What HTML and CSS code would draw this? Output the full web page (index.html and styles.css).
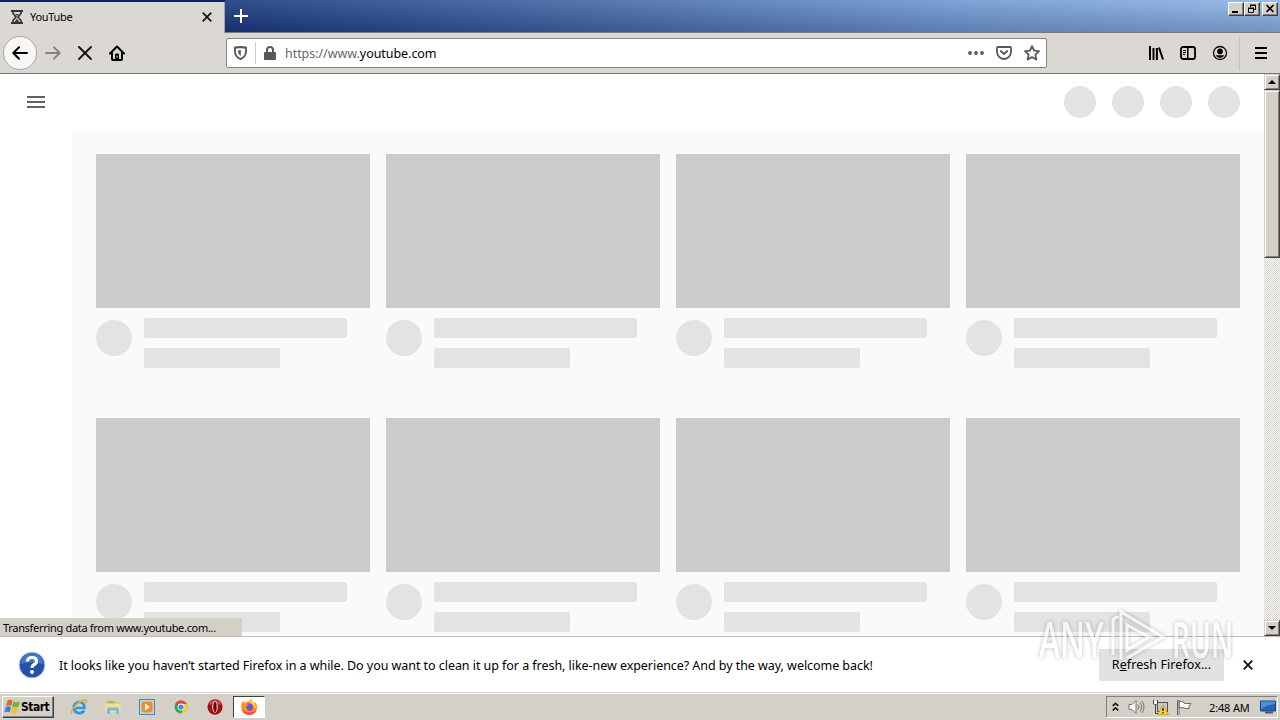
FILE: index.html
```
<!DOCTYPE html>
<html lang="en">
<head>
    <meta charset="UTF-8">
    <title>YouTube</title>
    <link rel="stylesheet" href="styles.css">
</head>
<body>
    <div class="tab-bar">
        <div class="tab">
            <svg class="tab-icon" width="12" height="14" viewBox="0 0 12 14" fill="none" stroke="#333"><path d="M0 1h12M0 13h12" stroke-width="2"/><path d="M2 1v2.500l3 3.500-3 3.500V13M10 1v2.500L7 7l3 3.500V13" stroke-width="1.600"/><path d="M4 4h4L6 6zM3.500 12L6 8.500 8.500 12z" fill="#444" stroke="none"/></svg>
            <span class="tab-title">YouTube</span>
            <svg class="tab-close" width="10" height="10" viewBox="0 0 10 10" stroke="#111" stroke-width="1.700"><path d="M.7.7l8.600 8.600M9.300.7L.7 9.300"/></svg>
        </div>
        <svg class="new-tab" width="14" height="14" viewBox="0 0 14 14" stroke="#fff" stroke-width="2"><path d="M7 0v14M0 7h14"/></svg>
        <div class="window-buttons">
            <div class="win-btn"><svg width="12" height="10" viewBox="0 0 12 10"><path d="M2 7h6v2H2z"/></svg></div>
            <div class="win-btn"><svg width="12" height="10" viewBox="0 0 12 10" fill="none" stroke="#000"><path d="M4.500 3V1.500h5v4H8M4 1.500h6M2.500 4.500h5v4h-5zM2 4.500h6"/><path d="M4 1h6M2 4h6"/></svg></div>
            <div class="win-btn close"><svg width="12" height="10" viewBox="0 0 12 10" stroke="#000" stroke-width="1.600"><path d="M2.500 1l7 7M9.500 1l-7 7"/></svg></div>
        </div>
    </div>

    <div class="toolbar">
        <div class="back"><svg width="16" height="14" viewBox="0 0 16 14" fill="none" stroke="#000" stroke-width="2" stroke-linecap="round" stroke-linejoin="round"><path d="M15 7H1.500M7 1.300L1.300 7 7 12.700"/></svg></div>
        <svg class="forward" width="16" height="14" viewBox="0 0 16 14" fill="none" stroke="#85837f" stroke-width="1.900" stroke-linecap="round" stroke-linejoin="round"><path d="M1 7h13.500M9 1.300L14.700 7 9 12.700"/></svg>
        <svg class="stop" width="14" height="14" viewBox="0 0 14 14" stroke="#111" stroke-width="1.900" stroke-linecap="round"><path d="M1 1l12 12M13 1L1 13"/></svg>
        <svg class="home" width="16" height="16" viewBox="0 0 16 16" fill="none" stroke="#000" stroke-width="2" stroke-linecap="round" stroke-linejoin="round"><path d="M1 8.500L8 1.500l7 7M3 8v6q0 1 1 1h8q1 0 1-1V8"/><path d="M6.500 14.500V9h3v5.500z" fill="#000" stroke-width="1"/><path d="M8 11v1.500" stroke="#ddd" stroke-width="1"/></svg>
        <div class="url-bar">
            <svg class="shield" width="13" height="14" viewBox="0 0 13 14" fill="none" stroke="#58585a" stroke-width="1.900"><path d="M1 1.500Q4 1.500 6.500 1 9 1.500 12 1.500v4.500Q11.500 11 6.500 13 1.500 11 1 6z" stroke-linejoin="round"/><path d="M6.800 4v6Q4 8.500 4 4.500z" fill="#58585a" stroke="none"/></svg>
            <span class="url-sep"></span>
            <svg class="lock" width="12" height="14" viewBox="0 0 12 14"><path d="M3 7V4a3 3 0 016 0v3" fill="none" stroke="#58585a" stroke-width="2"/><rect y="6" width="12" height="8" rx="1" fill="#58585a"/></svg>
            <span class="url">https://www.<b>youtube.com</b></span>
            <svg class="dots" width="16" height="4" viewBox="0 0 16 4" fill="#58585a"><circle cx="2" cy="2" r="1.900"/><circle cx="8" cy="2" r="1.900"/><circle cx="14" cy="2" r="1.900"/></svg>
            <svg class="pocket" width="16" height="14" viewBox="0 0 16 14" fill="none" stroke="#58585a" stroke-width="1.800" stroke-linecap="round" stroke-linejoin="round"><path d="M2 1h12q1 0 1 1v4a7 7 0 01-14 0V2q0-1 1-1z"/><path d="M4.700 5L8 8l3.300-3"/></svg>
            <svg class="star" width="16" height="16" viewBox="0 0 16 16" fill="none" stroke="#58585a" stroke-width="1.800" stroke-linejoin="round"><path d="M8 1.100l2.100 4.500 4.900.6-3.600 3.400.9 4.900L8 12.100l-4.300 2.400.9-4.900L1 6.200l4.900-.6z"/></svg>
        </div>
        <div class="tools">
            <svg width="16" height="14" viewBox="0 0 16 14" stroke="#000" stroke-width="2"><path d="M2 0v14M5.500 2v12M8.900 2v12M11 1.500l4 12"/></svg>
            <svg width="16" height="14" viewBox="0 0 16 14" fill="none" stroke="#000"><rect x="1" y="1" width="14" height="12" rx="2" stroke-width="1.800"/><path d="M7.800 1v12" stroke-width="1.500"/><path d="M3 4.500h3M3 6.500h3M3 8.500h2"/></svg>
            <svg width="16" height="16" viewBox="0 0 16 16"><circle cx="8" cy="8" r="6.500" fill="none" stroke="#000" stroke-width="1.300"/><circle cx="8" cy="6.400" r="2.800"/><path d="M3.600 10.300h8.800Q11 13 8 13T3.600 10.300z"/></svg>
            <span class="tool-sep"></span>
            <svg width="12" height="12" viewBox="0 0 12 12" stroke="#000" stroke-width="2"><path d="M0 1h12M0 6h12M0 11h12"/></svg>
        </div>
    </div>

    <div class="viewport">
        <div class="page">
            <div class="masthead">
                <svg class="guide" width="18" height="12" viewBox="0 0 18 12" stroke="#606060" stroke-width="2"><path d="M0 1h18M0 6h18M0 11h18"/></svg>
                <div class="masthead-buttons">
                    <i></i><i></i><i></i><i></i>
                </div>
            </div>
            <div class="home-grid">
                <div class="card"><div class="thumb"></div><div class="details"><div class="avatar"></div><div class="lines"><div class="line"></div><div class="line short"></div></div></div></div>
                <div class="card"><div class="thumb"></div><div class="details"><div class="avatar"></div><div class="lines"><div class="line"></div><div class="line short"></div></div></div></div>
                <div class="card"><div class="thumb"></div><div class="details"><div class="avatar"></div><div class="lines"><div class="line"></div><div class="line short"></div></div></div></div>
                <div class="card"><div class="thumb"></div><div class="details"><div class="avatar"></div><div class="lines"><div class="line"></div><div class="line short"></div></div></div></div>
                <div class="card"><div class="thumb"></div><div class="details"><div class="avatar"></div><div class="lines"><div class="line"></div><div class="line short"></div></div></div></div>
                <div class="card"><div class="thumb"></div><div class="details"><div class="avatar"></div><div class="lines"><div class="line"></div><div class="line short"></div></div></div></div>
                <div class="card"><div class="thumb"></div><div class="details"><div class="avatar"></div><div class="lines"><div class="line"></div><div class="line short"></div></div></div></div>
                <div class="card"><div class="thumb"></div><div class="details"><div class="avatar"></div><div class="lines"><div class="line"></div><div class="line short"></div></div></div></div>
            </div>
        </div>
        <div class="scrollbar">
            <div class="scroll-btn"><svg width="8" height="4" viewBox="0 0 8 4"><path d="M4 0l4 4H0z"/></svg></div>
            <div class="scroll-thumb"></div>
            <div class="scroll-btn bottom"><svg width="8" height="4" viewBox="0 0 8 4"><path d="M0 0h8L4 4z"/></svg></div>
        </div>
        <div class="status"><span>Transferring data from www.youtube.com...</span></div>
    </div>

    <div class="notification">
        <svg class="help" width="28" height="28" viewBox="0 0 28 28"><circle cx="14" cy="14" r="13.300" fill="#b9c9e6"/><circle cx="14" cy="14" r="12.300" fill="#2350a8"/><path d="M3 13a11 11 0 0122 0q-11-4-22 0z" fill="#4877c6"/><path d="M9.500 10.500Q9.500 6.500 14 6.500t4.500 3.800q0 2-2.300 3.200Q14 14.700 14 17" fill="none" stroke="#fff" stroke-width="3.200"/><circle cx="14" cy="21" r="2" fill="#fff"/></svg>
        <span class="message">It looks like you haven’t started Firefox in a while. Do you want to clean it up for a fresh, like-new experience? And by the way, welcome back!</span>
        <div class="refresh"><span>R<u>e</u>fresh Firefox...</span></div>
        <svg class="dismiss" width="10" height="10" viewBox="0 0 10 10" stroke="#111" stroke-width="1.800"><path d="M.7.7l8.600 8.600M9.300.7L.7 9.300"/></svg>
    </div>

    <div class="taskbar">
        <div class="start">
            <svg width="17" height="16" viewBox="0 0 17 16"><path d="M3.500 1.500Q6 0 8.500 1.800L7.300 7Q4.500 5.500 2 7z" fill="#e8642c"/><path d="M9.400 2.200Q12.500 4 16 2.300L14.500 7.800Q11.500 9 8.200 7.400z" fill="#74b53c"/><path d="M1.700 8Q4.500 6.600 7 8l-1.300 5.500Q3 12 .3 13.500z" fill="#3f7fd2"/><path d="M8 8.500Q11 10 14.200 8.800L12.800 14Q9.500 15.500 6.600 13.800z" fill="#f5bf2c"/></svg>
            <span>Start</span>
        </div>
        <div class="launch">
            <svg width="18" height="18" viewBox="0 0 18 18" fill="none"><path d="M14.200 12.500A5.600 5.600 0 118.900 4Q14.500 4 14.500 10H5.500" stroke="#3199d8" stroke-width="2.700"/><path d="M5.500 10Q6 5.800 9 5.200" stroke="#8bd5f4"/><path d="M2 16Q0 13.500 4.500 8.500T15.500 1.500Q18 2 15.500 5" stroke="#e3ad3c" stroke-width="1.400"/></svg>
            <svg width="18" height="18" viewBox="0 0 18 18"><path d="M2 3.500l1-1h5l1 1.500h7v5H2z" fill="#e5c45e"/><path d="M4 3h7v3H4z" fill="#8fc08a"/><path d="M1.500 5.500h15v9h-15z" fill="#f4df91"/><path d="M3 16v-5q0-1.500 1.500-1.500h9q1.500 0 1.500 1.500v5h-3v-3.500H6V16z" fill="#78b9df"/></svg>
            <svg width="18" height="18" viewBox="0 0 18 18"><rect x="1.500" y="1.500" width="15" height="15" fill="#b7d5ed" stroke="#4d83b3"/><rect x="3.500" y="3.500" width="11" height="11" rx="3" fill="#f28c1c"/><path d="M7 5.500l5 3.500-5 3.500z" fill="#fff"/></svg>
            <svg width="18" height="18" viewBox="0 0 18 18"><circle cx="9" cy="9" r="6.500" fill="#35a653"/><path d="M9 9L3.300 5.800A6.500 6.500 0 0114.700 5.900L9 6z" fill="#df4738"/><path d="M9 6h5.700A6.500 6.500 0 019 15.500L11.600 10.500z" fill="#f9c92e"/><circle cx="9" cy="9" r="3.400" fill="#fff"/><circle cx="9" cy="9" r="2.600" fill="#4384ed"/></svg>
            <svg width="18" height="18" viewBox="0 0 18 18"><ellipse cx="9" cy="9" rx="7.500" ry="7.800" fill="#a90e14"/><path d="M3 7Q4 2 9 2t6 5Q9 4 3 7z" fill="#d24b4a"/><ellipse cx="9" cy="9" rx="2.800" ry="5.700" fill="#e9dedb"/><ellipse cx="9" cy="9" rx="1.700" ry="5" fill="#65090e"/></svg>
        </div>
        <div class="task-active">
            <svg width="18" height="18" viewBox="0 0 18 18"><path d="M2 5l1-2 2 2q2-2 4-1.500Q9.500 1.500 11 .5q.5 2.500 3.500 4.500l.5-1q2 2.500 2 5.500a7.800 7.500 0 01-15.600 0Q1 7 2 5z" fill="#ff8a22"/><path d="M1.400 9Q1.500 16.500 9 17q6 0 7.700-5-5 3.500-10 2T1.400 9z" fill="#f9503f"/><path d="M11 .5q.5 2.500 3.500 4.500 2 2 1 6-2-5-6-6.500Q9.500 2 11 .5z" fill="#ffd43b"/><circle cx="9.200" cy="9.300" r="3.700" fill="#7051c8"/><path d="M4 6.500q3-1 5 .8-2 .2-3 1.500 0 3 3.500 3.200Q5 13.500 4 10z" fill="#ff9c27"/></svg>
        </div>
        <div class="tray">
            <svg class="chevrons" width="7" height="10" viewBox="0 0 7 10" fill="none" stroke="#000" stroke-width="1.500"><path d="M.7 4L3.500 1.300 6.300 4M.7 8.500l2.800-2.700 2.800 2.700"/></svg>
            <svg class="sound" width="17" height="16" viewBox="0 0 17 16" fill="none" stroke="#777"><path d="M1 5.500h3l4-4v13l-4-4H1z" fill="#f7f7f5"/><path d="M10 5.500q2 2.500 0 5M12 3.500q3.500 4.500 0 9M14 2q4 6 0 12"/></svg>
            <svg class="network" width="17" height="16" viewBox="0 0 17 16"><rect x="5.500" y="3.500" width="10" height="9" fill="#c8c9c7" stroke="#555"/><path d="M1.500 1v4h4V1M3.500 5v9.500H8" fill="none" stroke="#444"/><path d="M2 1.500h3V5H2z" fill="#f7f7f7"/><path d="M11 6l5.500 9.500h-11z" fill="#ffd42c" stroke="#b78200" stroke-width=".6"/><path d="M11 9v3M11 13v1.200" stroke="#000" stroke-width="1.200"/></svg>
            <svg class="flag" width="16" height="15" viewBox="0 0 16 15" fill="#fff" stroke="#666"><path d="M1.500.5h1.500v14H1.500zM3 1.500q3-1 5 1 0 1.500 1.500 1H15l-2 2.500 0 2.500Q10 9 8 8 6 7 3 8z"/></svg>
            <span class="clock">2:48 AM</span>
            <svg class="desktop" width="16" height="14" viewBox="0 0 16 14"><path d="M.5 1h15v10H.5z" fill="#2463b5" stroke="#174579"/><path d="M1 1.500h14V4Q7 5 1 9z" fill="#4b91d9"/><path d="M5 11.500h8v2H5z" fill="#4c5968"/></svg>
        </div>
    </div>

    <svg class="watermark" width="204" height="72" viewBox="0 0 204 72">
        <g class="watermark-text">
            <text x="4" y="53" textLength="65" lengthAdjust="spacingAndGlyphs">ANY</text>
            <text x="137" y="53" textLength="61" lengthAdjust="spacingAndGlyphs">RUN</text>
        </g>
        <path d="M78 50V16q0-4 6-4M86 54V7l42 25-36 21M92 45V20l22 12z" fill="none" stroke="#fff" stroke-width="3"/>
    </svg>
</body>
</html>
```
FILE: styles.css
```
body {
    margin: 0;
    width: 1280px;
    height: 720px;
    overflow: hidden;
    position: relative;
    display: flex;
    flex-direction: column;
    background: #fff;
    font-family: "Noto Sans", sans-serif;
    color: #000;
}
svg {
    display: block;
    flex: none;
}
.tab-bar {
    display: flex;
    height: 33px;
    box-sizing: border-box;
    background: linear-gradient(to bottom, rgba(255, 255, 255, 0.1), rgba(0, 0, 30, 0.18)), linear-gradient(to right, #0a246a, #1a3980 225px, #446aa7 600px, #7099d2 950px, #8eb5e5);
    border-bottom: 1px solid #77797c;
    flex: none;
}
.tab {
    display: flex;
    align-items: center;
    width: 225px;
    height: 31px;
    margin-top: 2px;
    box-sizing: border-box;
    background: #dbd8d3;
    border-right: 1px solid #a6a4a1;
    margin-bottom: -1px;
    padding: 0 12px 1px 11px;
    box-shadow: 0 -2px #0a246a;
}
.tab-title {
    font-size: 11px;
    line-height: 15px;
    margin: -2px 0 0 7px;
    letter-spacing: -0.3px;
    flex: 1;
}
.new-tab {
    margin: 9px 0 0 9px;
}
.window-buttons {
    display: flex;
    margin: 2px 2px 0 auto;
}
.win-btn {
    width: 16px;
    height: 14px;
    box-sizing: border-box;
    background: #d4d0c8;
    border: 1px solid;
    border-color: #fff #404040 #404040 #fff;
    padding: 1px;
    box-shadow: inset -1px -1px #808080;
}
.win-btn.close {
    margin-left: 2px;
}
.toolbar {
    display: flex;
    align-items: center;
    height: 41px;
    box-sizing: border-box;
    background: #dbd8d3;
    border-bottom: 1px solid #777;
    padding-left: 3px;
    flex: none;
}
.back {
    width: 34px;
    height: 34px;
    box-sizing: border-box;
    border: 1px solid #aaa8a3;
    border-radius: 50%;
    background: #f8f7f6;
    display: flex;
    align-items: center;
    justify-content: center;
}
.forward {
    margin-left: 8px;
}
.stop {
    margin-left: 17px;
}
.home {
    margin-left: 17px;
}
.url-bar {
    display: flex;
    align-items: center;
    width: 821px;
    height: 30px;
    box-sizing: border-box;
    margin-left: 101px;
    border: 1px solid #858482;
    border-radius: 2px;
    background: #fff;
    padding: 0 6px 0 7px;
}
.url-sep {
    width: 1px;
    height: 22px;
    background: #ccc;
    margin: 0 8px 0 8px;
}
.url {
    font-size: 12.5px;
    letter-spacing: -0.05px;
    margin-left: 9px;
    color: #666;
    flex: 1;
}
.url b {
    font-weight: normal;
    color: #000;
}
.pocket {
    margin: 0 12px;
}
.tools {
    display: flex;
    align-items: center;
    margin: 0 13px 0 auto;
    gap: 16px;
}
.tool-sep {
    width: 1px;
    height: 34px;
    background: #c5c2bd;
    margin: 0 -1px 0 -5px;
}
.viewport {
    position: relative;
    display: flex;
    height: 562px;
    overflow: hidden;
    flex: none;
}
.page {
    width: 1264px;
}
.masthead {
    display: flex;
    align-items: center;
    height: 56px;
    padding: 0 24px 0 27px;
}
.masthead-buttons {
    display: flex;
    gap: 16px;
    margin-left: auto;
}
.masthead-buttons i {
    width: 32px;
    height: 32px;
    border-radius: 50%;
    background: #e3e3e3;
}
.home-grid {
    display: grid;
    grid-template-columns: repeat(4, 274px);
    gap: 50px 16px;
    margin-left: 72px;
    padding: 24px;
    background: #fafafa;
}
.thumb {
    height: 154px;
    background: #cbcbcb;
}
.details {
    display: flex;
    margin-top: 10px;
}
.avatar {
    width: 36px;
    height: 36px;
    border-radius: 50%;
    background: #e3e3e3;
    margin: 2px 12px 0 0;
}
.line {
    width: 203px;
    height: 20px;
    border-radius: 2px;
    background: #e3e3e3;
}
.line.short {
    width: 136px;
    margin-top: 10px;
}
.scrollbar {
    width: 16px;
    display: flex;
    flex-direction: column;
    background: repeating-conic-gradient(#fff 0 25%, #d4d0c8 0 50%) 0 0 / 2px 2px;
}
.scroll-btn, .scroll-thumb {
    box-sizing: border-box;
    background: #d4d0c8;
    border: 1px solid;
    border-color: #d4d0c8 #404040 #404040 #d4d0c8;
    box-shadow: inset 1px 1px #fff, inset -1px -1px #808080;
}
.scroll-btn {
    height: 16px;
    display: flex;
    align-items: center;
    justify-content: center;
}
.scroll-btn.bottom {
    margin-top: auto;
}
.scroll-thumb {
    height: 168px;
}
.status {
    position: absolute;
    left: 0;
    bottom: 0;
    width: 242px;
    height: 18px;
    background: #d4d0c8;
    box-sizing: border-box;
    padding-left: 3px;
    font-size: 11px;
    line-height: 20px;
    letter-spacing: -0.31px;
    white-space: nowrap;
}
.notification {
    display: flex;
    align-items: center;
    height: 56px;
    box-sizing: border-box;
    border-top: 1px solid #bdbcba;
    padding: 0 27px 0 18px;
    flex: none;
}
.message {
    font-size: 12.5px;
    letter-spacing: -0.05px;
    margin: 1px 0 0 13px;
    white-space: nowrap;
    flex: 1;
}
.refresh {
    width: 125px;
    height: 32px;
    background: #e2e2e2;
    font-size: 12.5px;
    letter-spacing: 0.08px;
    line-height: 32px;
    text-align: center;
    margin-right: 19px;
}
.taskbar {
    display: flex;
    align-items: center;
    height: 28px;
    box-sizing: border-box;
    background: #d4d0c8;
    border-top: 1px solid #d4d0c8;
    box-shadow: inset 0 1px #fff;
    padding: 1px 2px 0;
    flex: none;
}
.start {
    display: flex;
    align-items: center;
    width: 52px;
    height: 22px;
    box-sizing: border-box;
    border: 1px solid;
    border-color: #fff #404040 #404040 #fff;
    box-shadow: inset -1px -1px #808080;
    font: bold 12px "DejaVu Sans Condensed", sans-serif;
    padding-left: 1px;
}
.start span {
    letter-spacing: -0.5px;
}
.launch {
    display: flex;
    gap: 16px;
    margin-left: 16px;
}
.task-active {
    display: flex;
    align-items: center;
    justify-content: center;
    width: 32px;
    height: 22px;
    box-sizing: border-box;
    border: 1px solid;
    border-color: #404040 #fff #fff #404040;
    background: #fff;
    margin-left: 9px;
}
.tray {
    display: flex;
    align-items: center;
    width: 172px;
    height: 22px;
    box-sizing: border-box;
    border: 1px solid;
    border-color: #808080 #fff #fff #808080;
    margin-left: auto;
    padding: 0 1px 0 5px;
}
.sound {
    margin-left: 9px;
}
.network {
    margin-left: 7px;
}
.flag {
    margin-left: 7px;
}
.clock {
    font-size: 11px;
    letter-spacing: -0.15px;
    margin-left: 17px;
    white-space: nowrap;
}
.desktop {
    margin-left: auto;
}
.watermark {
    position: absolute;
    left: 1035px;
    top: 605px;
    opacity: 0.65;
    filter: drop-shadow(0 0 2px rgba(0, 0, 0, 0.4));
}
.watermark-text {
    font: 600 50px "Open Sans", sans-serif;
    fill: #fff;
}
```
